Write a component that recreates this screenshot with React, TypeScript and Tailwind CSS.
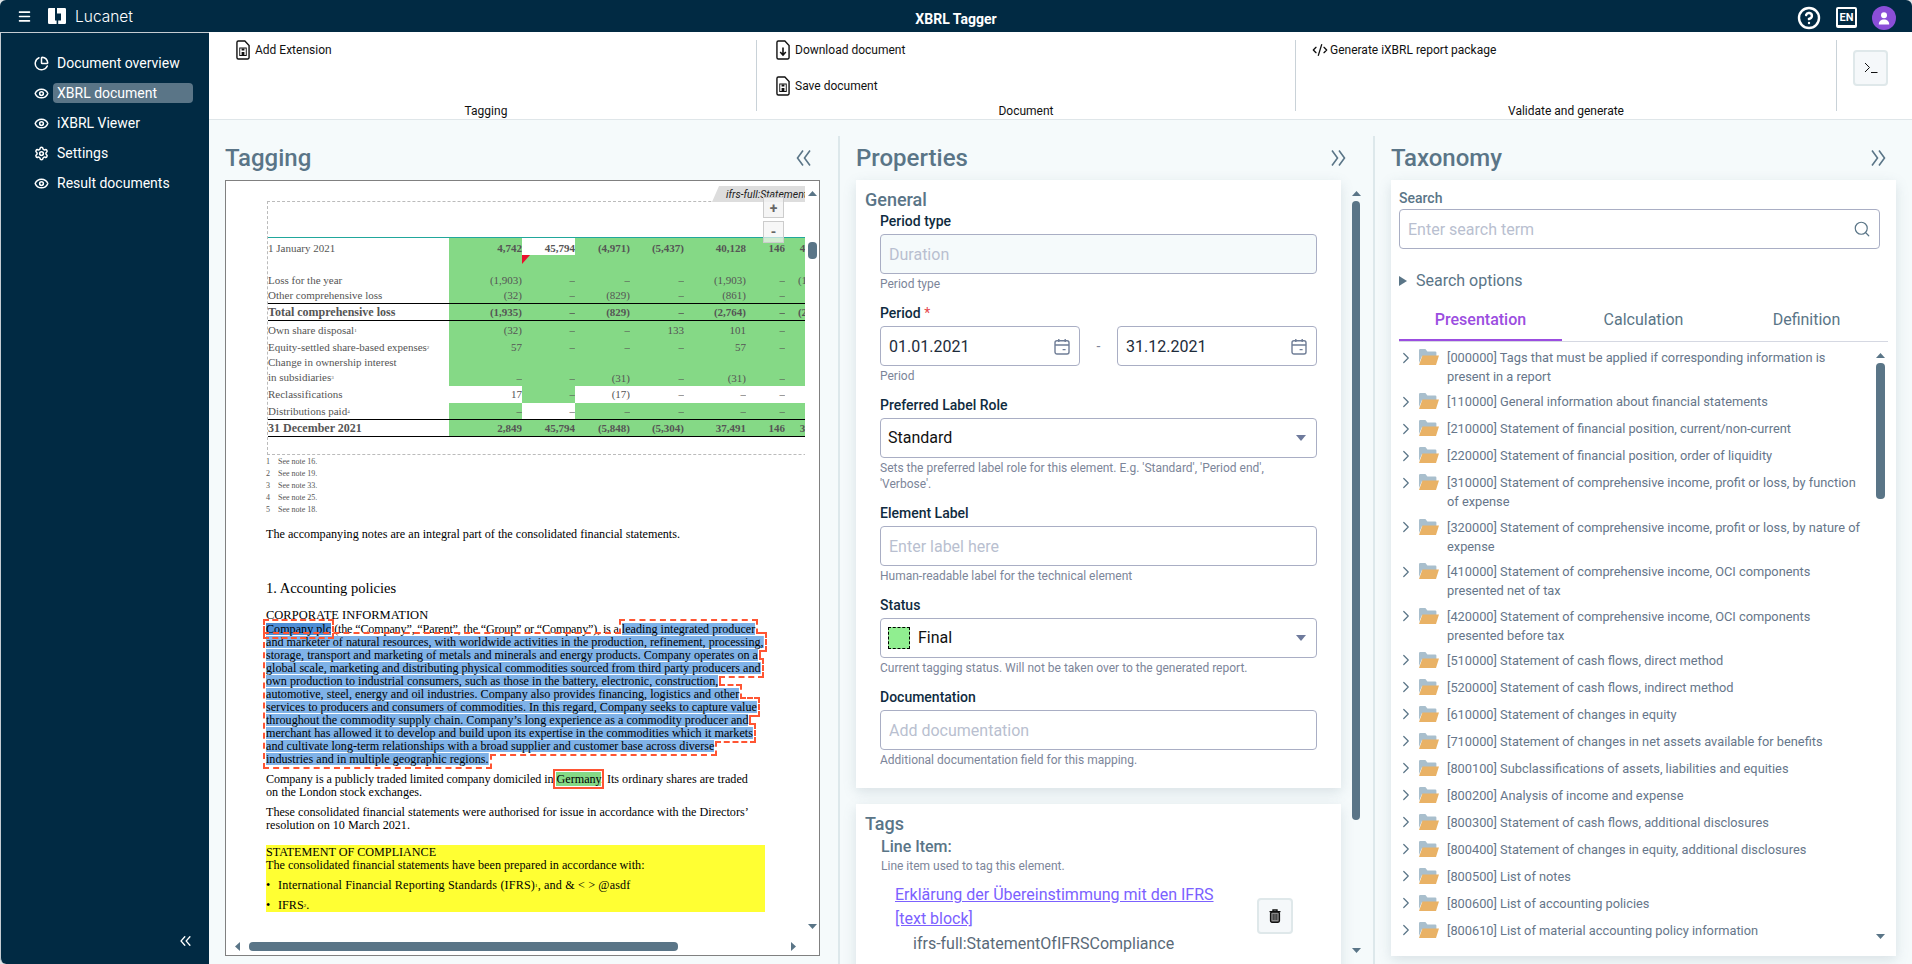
import React from "react";
import { ChartPie, Eye, Settings, ChevronRight, Search, CodeXml, CircleHelp, Menu } from "lucide-react";

const Tri = ({ d, c = "#5a7587", w = 9, h = 5 }: { d: "u" | "d" | "l" | "r"; c?: string; w?: number; h?: number }) => {
  const pts = { u: "0,10 5,0 10,10", d: "0,0 10,0 5,10", l: "10,0 10,10 0,5", r: "0,0 10,5 0,10" }[d];
  return (
    <svg width={w} height={h} viewBox="0 0 10 10" preserveAspectRatio="none" className="block shrink-0">
      <polygon points={pts} fill={c} />
    </svg>
  );
};

const Chevrons = ({ dir, w = 15, h = 16, sw = 1.6, c = "#5a7587" }: { dir: "l" | "r"; w?: number; h?: number; sw?: number; c?: string }) => (
  <svg width={w} height={h} viewBox="0 0 15 16" preserveAspectRatio="none" className="block shrink-0" fill="none" stroke={c} strokeWidth={sw}>
    {dir === "l" ? <path d="M7 0.5L1.5 8 7 15.5M14 0.5L8.5 8 14 15.5" /> : <path d="M1 0.5L6.5 8 1 15.5M8 0.5L13.5 8 8 15.5" />}
  </svg>
);

const FileIcon = ({ kind }: { kind: "floppy" | "down" }) => (
  <svg width="14" height="20" viewBox="0 0 15 20" preserveAspectRatio="none" className="block shrink-0" fill="none" stroke="#111" strokeWidth="1.5">
    <path d="M2.5 1h7l4.5 4.5V17.5a1.5 1.5 0 0 1-1.5 1.5h-10A1.5 1.5 0 0 1 1 17.5V2.5A1.5 1.5 0 0 1 2.5 1z" />
    {kind === "floppy" ? (
      <g strokeWidth="1">
        <rect x="4" y="8" width="7" height="7.5" />
        <rect x="6" y="8.5" width="3" height="2" fill="#111" stroke="none" />
        <rect x="6" y="12" width="3" height="3" fill="#111" stroke="none" />
      </g>
    ) : (
      <path d="M7.5 7.5v7.5M4.5 12l3 3 3-3" strokeWidth="1.7" />
    )}
  </svg>
);

const Logo = () => (
  <svg width="18" height="16" viewBox="0 0 18 16" className="block shrink-0" fill="#fff">
    <path d="M0 1.2A1.2 1.2 0 0 1 1.2 0H7v12.5h1.6V16H1.2A1.2 1.2 0 0 1 0 14.8z" />
    <path d="M9 0h7.8A1.2 1.2 0 0 1 18 1.2v13.6a1.2 1.2 0 0 1-1.2 1.2H10.2v-3.5H13V5.5H9z" />
  </svg>
);

const Calendar = () => (
  <svg width="16" height="17" viewBox="0 0 16 17" className="block shrink-0" fill="none" stroke="#6f7d96" strokeWidth="1.4">
    <rect x="1" y="2.8" width="14" height="13.2" rx="2" />
    <path d="M1 7h14M4.8 1v3M11.2 1v3M8.6 11.6h3" />
  </svg>
);

const Folder = () => (
  <svg width="20" height="16" viewBox="0 0 20 16" className="block shrink-0">
    <path d="M0 1.2A1.2 1.2 0 0 1 1.2 0h5.2l2 2.4h7.8a1.2 1.2 0 0 1 1.2 1.2V7H3L0 14z" fill="#a9bfcd" />
    <path d="M3.4 6.4H20L17 16H0z" fill="#e9b266" />
  </svg>
);

const Trash = () => (
  <svg width="12" height="14" viewBox="0 0 12 14" className="block" fill="none" stroke="#111" strokeWidth="1.4">
    <path d="M0.5 2.6h11M4 2.4V1h4v1.4" />
    <rect x="1.6" y="3" width="8.8" height="10.2" rx="1.4" fill="#8a8a8a" />
    <path d="M4.2 5v6M6 5v6M7.8 5v6" stroke="#111" strokeWidth="0.8" />
  </svg>
);

const nav = [
  { t: "Document overview", i: <ChartPie size={15} strokeWidth={2.4} /> },
  { t: "XBRL document", i: <Eye size={15} strokeWidth={2.4} />, a: true },
  { t: "iXBRL Viewer", i: <Eye size={15} strokeWidth={2.4} /> },
  { t: "Settings", i: <Settings size={15} strokeWidth={2.4} /> },
  { t: "Result documents", i: <Eye size={15} strokeWidth={2.4} /> },
];

const Header = () => (
  <header className="relative flex h-[32px] shrink-0 items-center rounded-t-[6px] bg-[#012a43] text-white">
    <Menu size={15} strokeWidth={2.5} className="ml-[17px] shrink-0" />
    <div className="ml-[16px]"><Logo /></div>
    <span className="ml-[9px] pt-[1px] font-['Inter',sans-serif] text-[15.5px] font-light leading-[32px]">Lucanet</span>
    <div className="absolute left-0 right-0 top-[1px] text-center text-[14px] font-bold leading-[36px]">XBRL Tagger</div>
    <div className="ml-auto mr-[16px] flex items-center">
      <CircleHelp size={24} strokeWidth={2.4} className="mt-[3px]" />
      <span className="ml-[15px] mt-[3px] flex h-[21px] w-[21px] items-center justify-center rounded-[2px] border-2 border-b-[3px] border-white text-[11px] font-bold leading-none">EN</span>
      <span className="ml-[15px] mt-[4px] flex h-[24px] w-[24px] items-center justify-center rounded-full bg-[#8b4ed8]">
        <svg width="12" height="13" viewBox="0 0 12 13" fill="#fff"><circle cx="6" cy="3.2" r="3" /><path d="M0.8 12.5c0-3.2 2.2-5 5.2-5s5.2 1.8 5.2 5z" /></svg>
      </span>
    </div>
  </header>
);

const Sidebar = () => (
  <aside className="flex h-full w-[209px] shrink-0 flex-col rounded-bl-[6px] border-t border-l border-[#c5ccd2] bg-[#012a43] pt-[15px] text-white">
    {nav.map((n) => (
      <div key={n.t} className="flex h-[30px] items-center pl-[33px]">
        <span className="flex w-[19px] shrink-0">{n.i}</span>
        <span className={`flex h-[20px] w-[140px] items-center rounded-[4px] pl-[4px] text-[14px] ${n.a ? "bg-[#5a7587]" : ""}`}>{n.t}</span>
      </div>
    ))}
    <div className="mt-auto mb-[18px] ml-[179px]"><Chevrons dir="l" w={11} h={10} sw={2} c="#fff" /></div>
  </aside>
);

const ToolItem = ({ icon, label, gap = "ml-[5px]" }: { icon: React.ReactNode; label: string; gap?: string }) => (
  <div className="flex h-[20px] items-center">
    {icon}
    <span className={`${gap} text-[12px] leading-[20px] text-[#111]`}>{label}</span>
  </div>
);

const Section = ({ w, pl, label, children }: { w: string; pl: string; label: string; children: React.ReactNode }) => (
  <section className={`flex h-[71px] shrink-0 flex-col border-r border-[#c9d2d8] ${w}`}>
    <div className={`flex flex-col gap-[16px] ${pl}`}>{children}</div>
    <div className="mt-auto mb-[-6px] text-center text-[12px] leading-[12px] text-[#111]">{label}</div>
  </section>
);

const Toolbar = () => (
  <div className="flex h-[88px] shrink-0 border-b border-[#dfe6e9] bg-white pl-[7px] pt-[8px]">
    <Section w="w-[541px]" pl="pl-[20px]" label="Tagging"><ToolItem icon={<FileIcon kind="floppy" />} label="Add Extension" /></Section>
    <Section w="w-[539px]" pl="pl-[19px]" label="Document">
      <ToolItem icon={<FileIcon kind="down" />} label="Download document" />
      <ToolItem icon={<FileIcon kind="floppy" />} label="Save document" />
    </Section>
    <Section w="w-[541px]" pl="pl-[16px]" label="Validate and generate">
      <ToolItem icon={<CodeXml size={16} strokeWidth={2} color="#111" />} label="Generate iXBRL report package" gap="ml-[2px]" />
    </Section>
    <div className="ml-[16px] mt-[10px] flex h-[36px] w-[35px] items-center justify-center rounded-[4px] border-2 border-[#dfe8ea] bg-[#f5f8fa]">
      <svg width="14" height="12" viewBox="0 0 14 12" fill="none" stroke="#111" strokeWidth="1"><path d="M1 1l4.5 4.5L1 10M7 10.5h6.5" /></svg>
    </div>
  </div>
);

const PanelHead = ({ title, dir, right }: { title: string; dir: "l" | "r"; right: string }) => (
  <div className={`flex h-[44px] shrink-0 items-center justify-between ${right}`}>
    <h2 className="text-[24px] font-medium leading-[32px] text-[#5a7587]">{title}</h2>
    <Chevrons dir={dir} />
  </div>
);

type Cell = string | { v: string; w: boolean };
const W = (v: string): Cell => ({ v, w: true });
const S = ({ n }: { n: string }) => <sup className="relative top-[-2px] align-baseline text-[5px] leading-none">{n}</sup>;
const rows: { l: React.ReactNode; c: Cell[]; h: string; b?: boolean; nb?: boolean; line?: boolean; a?: string; ll?: string }[] = [
  { l: "1 January 2021", c: ["4,742", W("45,794"), "(4,971)", "(5,437)", "40,128", "146", "40,274"], h: "h-[34px]", a: "align-top pt-[4px]", nb: true },
  { l: "Loss for the year", c: ["(1,903)", "–", "–", "–", "(1,903)", "–", "(1,903)"], h: "h-[16px]" },
  { l: "Other comprehensive loss", c: ["(32)", "–", "(829)", "–", "(861)", "–", "(861)"], h: "h-[16px]", line: true },
  { l: "Total comprehensive loss", c: ["(1,935)", "–", "(829)", "–", "(2,764)", "–", "(2,764)"], h: "h-[17px]", b: true, line: true },
  { l: <>Own share disposal<S n="1" /></>, c: ["(32)", "–", "–", "133", "101", "–", "101"], h: "h-[19px]" },
  { l: <>Equity-settled share-based expenses<S n="2" /></>, c: ["57", "–", "–", "–", "57", "–", "57"], h: "h-[15px]" },
  { l: <>Change in ownership interest<br />in subsidiaries<S n="3" /></>, c: ["–", "–", "(31)", "–", "(31)", "–", "(31)"], h: "h-[30px]", a: "align-bottom pb-[1px]", ll: "leading-[15px]" },
  { l: "Reclassifications", c: [W("17"), "–", W("(17)"), W("–"), W("–"), W("–"), W("–")], h: "h-[17px]" },
  { l: <>Distributions paid<S n="4" /></>, c: ["–", W("–"), "–", "–", "–", "–", "–"], h: "h-[17px]", line: true },
  { l: "31 December 2021", c: ["2,849", "45,794", "(5,848)", "(5,304)", "37,491", "146", "37,637"], h: "h-[17px]", b: true, line: true, a: "align-middle pt-[1px]" },
];
const colW = ["w-[73px]", "w-[53px]", "w-[55px]", "w-[54px]", "w-[62px]", "w-[39px]", "w-[45px]"];

const DocTable = () => (
  <table className="w-[562px] table-fixed border-separate border-spacing-0 text-[11px] leading-[13px] text-[#555]">
    <colgroup>
      <col className="w-[181px]" />
      {colW.map((c) => <col key={c} className={c} />)}
    </colgroup>
    <tbody>
      {rows.map((r, i) => (
        <tr key={i} className={r.h}>
          <td className={`p-0 ${r.a ?? "align-middle"} ${r.ll ?? ""} whitespace-nowrap ${r.b ? "text-[12px] font-bold" : ""} ${r.line ? "border-b border-black" : ""}`}>{r.l}</td>
          {r.c.map((c, j) => {
            const white = typeof c !== "string";
            const v = typeof c === "string" ? c : c.v;
            return (
              <td key={j} className={`relative overflow-visible whitespace-nowrap p-0 text-right ${r.a ?? "align-middle"} ${white ? "bg-white" : "bg-[#85d986]"} ${r.b || r.nb ? "font-bold" : ""} ${r.line ? "border-b border-black" : ""}`}>
                {i === 0 && j === 1 ? (
                  <>
                    {v}
                    <span className="absolute left-0 top-[17px] h-[17px] w-full bg-[#85d986]">
                      <svg width="8" height="9" className="block" viewBox="0 0 8 9"><polygon points="0,0 8,0 0,9" fill="#e8112d" /></svg>
                    </span>
                  </>
                ) : v}
              </td>
            );
          })}
        </tr>
      ))}
    </tbody>
  </table>
);

const Doc = () => (
  <div className="flex h-[776px] flex-col border border-[#808080] bg-white">
    <div className="flex min-h-0 flex-1">
      <div className="relative min-w-0 flex-1 overflow-hidden pl-[41px] pt-[20px] font-['Liberation_Serif',serif] text-[12.15px] leading-[13px] text-black">
        <div className="h-[254px] w-[700px] border-l border-t border-b border-dashed border-[#bbb]">
          <div className="mt-[35px] border-t border-[#21a79c]"><DocTable /></div>
        </div>
        <div className="absolute left-[486px] top-[5px] h-[16px] w-[93px] overflow-hidden whitespace-nowrap bg-[#ddd] pl-[14px] font-['Roboto',sans-serif] text-[10.5px] italic leading-[17px] text-[#222] [clip-path:polygon(7px_0,100%_0,100%_100%,0_100%)]">ifrs-full:StatementOfIFRSCompliance</div>
        <div className="absolute left-[537px] top-[16px] flex h-[21px] w-[21px] items-center justify-center border border-[#ccc] bg-[#f3f3f3]/80 font-['Roboto',sans-serif] text-[14px] font-bold leading-none text-[#666]">+</div>
        <div className="absolute left-[537px] top-[40px] flex h-[22px] w-[21px] items-center justify-center border border-[#ccc] bg-[#f3f3f3]/70 font-['Roboto',sans-serif] text-[14px] font-bold leading-none text-[#666]">-</div>
        <div className="ml-[-1px] mt-[1px] text-[8px] leading-[12px] text-[#555]">
          {["16", "19", "33", "25", "18"].map((n, i) => (
            <div key={n} className="flex"><span className="w-[12px]">{i + 1}</span><span>See note {n}.</span></div>
          ))}
        </div>
        <div className="ml-[-1px]">
          <p className="mt-[12px] whitespace-nowrap">The accompanying notes are an integral part of the consolidated financial statements.</p>
          <p className="mt-[40px] whitespace-nowrap text-[14.5px] leading-[15px]">1. Accounting policies</p>
          <p className="mt-[12px] whitespace-nowrap text-[12.5px] leading-[14px]">CORPORATE INFORMATION</p>
          <p className="mt-[1px] whitespace-nowrap">
            <span className="bg-[linear-gradient(#4f8fd6,#4f8fd6)] bg-[length:100%_12px] bg-center bg-no-repeat outline-2 outline-offset-1 outline-dashed outline-[#ff5533]">Company plc</span>{" "}
            <span className="tracking-[-0.17px]">(the “Company”, “Parent”, the “Group” or “Company”), is a</span>{" "}
            <span className="outline-2 outline-offset-1 outline-dashed outline-[#ff5533]">
              <span className="bg-[linear-gradient(#7fb2e8,#7fb2e8)] bg-[length:100%_12px] bg-center bg-no-repeat [-webkit-box-decoration-break:clone] [box-decoration-break:clone]">
                leading integrated producer<br />
                and marketer of natural resources, with worldwide activities in the production, refinement, processing,<br />
                storage, transport and marketing of metals and minerals and energy products. Company operates on a<br />
                global scale, marketing and distributing physical commodities sourced from third party producers and<br />
                own production to industrial consumers, such as those in the battery, electronic, construction,<br />
                automotive, steel, energy and oil industries. Company also provides financing, logistics and other<br />
                services to producers and consumers of commodities. In this regard, Company seeks to capture value<br />
                throughout the commodity supply chain. Company’s long experience as a commodity producer and<br />
                merchant has allowed it to develop and build upon its expertise in the commodities which it markets<br />
                and cultivate long-term relationships with a broad supplier and customer base across diverse<br />
                industries and in multiple geographic regions.
              </span>
            </span>
          </p>
          <p className="mt-[7px] whitespace-nowrap">
            <span className="tracking-[-0.08px]">Company is a publicly traded limited company domiciled in</span> <span className="bg-[#85d986] outline-2 outline-offset-1 outline-[#ff5533]">Germany</span>. Its ordinary shares are traded<br />on the London stock exchanges.
          </p>
          <p className="mt-[7px] whitespace-nowrap">These consolidated financial statements were authorised for issue in accordance with the Directors’<br />resolution on 10 March 2021.</p>
          <div className="mt-[13px] h-[67px] w-[499px] whitespace-nowrap bg-[#ffff33]">
            <p className="pt-[1px]">STATEMENT OF COMPLIANCE</p>
            <p>The consolidated financial statements have been prepared in accordance with:</p>
            <p className="mt-[7px] flex"><span className="w-[12px]">•</span><span className="tracking-[0.15px]">International Financial Reporting Standards (IFRS)<S n="1" />, and &amp; &lt; &gt; @asdf</span></p>
            <p className="mt-[7px] flex"><span className="w-[12px]">•</span><span>IFRS<S n="2" />.</span></p>
          </div>
        </div>
      </div>
      <div className="flex w-[14px] shrink-0 flex-col items-center pt-[10px]">
        <Tri d="u" />
        <div className="mt-[46px] h-[17px] w-[9px] rounded-[4px] bg-[#5a7587]" />
        <div className="mt-auto mb-[10px]"><Tri d="d" /></div>
      </div>
    </div>
    <div className="flex h-[16px] shrink-0 items-center pl-[9px] pb-[1px]">
      <Tri d="l" w={5} h={9} />
      <div className="ml-[9px] h-[9px] w-[429px] rounded-[4px] bg-[#5a7587]" />
      <div className="ml-[113px]"><Tri d="r" w={5} h={9} /></div>
    </div>
  </div>
);

const inputCls = "h-[40px] w-full rounded-[4px] border border-[#a9aec4] px-[8px] text-[16px] outline-none placeholder:text-[#b9bfd0]";

const Field = ({ label, help, req, children }: { label: string; help: string; req?: boolean; children: React.ReactNode }) => (
  <div className="mb-[12px]">
    <div className="mb-[4px] text-[14px] font-medium leading-[18px] text-[#0f2b40]">{label}{req && <span className="font-normal text-[#e5484d]"> *</span>}</div>
    {children}
    <div className="mt-[2px] text-[12px] leading-[16px] text-[#7c8599]">{help}</div>
  </div>
);

const SelectBox = ({ children }: { children: React.ReactNode }) => (
  <div className="flex h-[40px] items-center justify-between rounded-[4px] border border-[#a9aec4] pl-[7px] pr-[10px] text-[16px] text-[#111]">
    {children}
    <Tri d="d" c="#6e7a9c" w={10} h={6} />
  </div>
);

const DateBox = ({ v }: { v: string }) => (
  <div className="flex h-[40px] w-[200px] items-center justify-between rounded-[4px] border border-[#a9aec4] pl-[8px] pr-[9px] text-[16px] text-[#1d2b3a]">
    <span className="pt-[1px]">{v}</span><Calendar />
  </div>
);

const card = "bg-white shadow-[0_4px_12px_rgba(90,117,135,0.18)]";

const Properties = () => (
  <div className="flex min-h-0 flex-1">
    <div className="w-[485px] shrink-0">
      <div className={`${card} pl-[9px] pr-[24px] pt-[8px] pb-[8px]`}>
        <h3 className="text-[18px] font-medium leading-[24px] text-[#5a7587]">General</h3>
        <div className="pl-[15px]">
          <Field label="Period type" help="Period type"><input disabled placeholder="Duration" className={`${inputCls} bg-[#f5fafb]`} /></Field>
          <Field label="Period" req help="Period">
            <div className="flex items-center justify-between"><DateBox v="01.01.2021" /><span className="text-[14px] text-[#7c8599]">-</span><DateBox v="31.12.2021" /></div>
          </Field>
          <Field label="Preferred Label Role" help="Sets the preferred label role for this element. E.g. 'Standard', 'Period end', 'Verbose'.">
            <SelectBox>Standard</SelectBox>
          </Field>
          <Field label="Element Label" help="Human-readable label for the technical element"><input placeholder="Enter label here" className={inputCls} /></Field>
          <Field label="Status" help="Current tagging status. Will not be taken over to the generated report.">
            <SelectBox><span className="flex items-center gap-[8px]"><span className="h-[22px] w-[22px] border border-dashed border-black bg-[#90ee90]" />Final</span></SelectBox>
          </Field>
          <Field label="Documentation" help="Additional documentation field for this mapping."><input placeholder="Add documentation" className={inputCls} /></Field>
        </div>
      </div>
      <div className={`${card} mt-[16px] pl-[9px] pr-[24px] pt-[8px] pb-[20px]`}>
        <h3 className="text-[18px] font-medium leading-[24px] text-[#5a7587]">Tags</h3>
        <div className="pl-[16px]">
          <div className="text-[16px] font-medium leading-[22px] text-[#5a7587]">Line Item:</div>
          <div className="text-[12px] leading-[16px] text-[#7c8599]">Line item used to tag this element.</div>
          <div className="mt-[9px] flex">
            <div className="ml-[14px] w-[362px] shrink-0">
              <a className="block w-[330px] text-[16px] leading-[24px] text-[#7b61ff] underline">Erklärung der Übereinstimmung mit den IFRS [text block]</a>
              <div className="ml-[18px] mt-[1px] text-[16px] leading-[24px] text-[#5a6a78]">ifrs-full:StatementOfIFRSCompliance</div>
            </div>
            <div className="mt-[15px] flex h-[36px] w-[36px] items-center justify-center rounded-[4px] border-2 border-[#dfe8ea] bg-[#f5f8fa]"><Trash /></div>
          </div>
        </div>
      </div>
    </div>
    <div className="ml-[11px] flex h-[784px] w-[8px] shrink-0 flex-col items-center pt-[11px]">
      <Tri d="u" />
      <div className="mt-[5px] h-[619px] w-[8px] shrink-0 rounded-[4px] bg-[#5a7587]" />
      <div className="mt-[128px]"><Tri d="d" /></div>
    </div>
  </div>
);

const tree: [string, boolean?][] = [
  ["[000000] Tags that must be applied if corresponding information is present in a report", true],
  ["[110000] General information about financial statements"],
  ["[210000] Statement of financial position, current/non-current"],
  ["[220000] Statement of financial position, order of liquidity"],
  ["[310000] Statement of comprehensive income, profit or loss, by function of expense", true],
  ["[320000] Statement of comprehensive income, profit or loss, by nature of expense", true],
  ["[410000] Statement of comprehensive income, OCI components presented net of tax", true],
  ["[420000] Statement of comprehensive income, OCI components presented before tax", true],
  ["[510000] Statement of cash flows, direct method"],
  ["[520000] Statement of cash flows, indirect method"],
  ["[610000] Statement of changes in equity"],
  ["[710000] Statement of changes in net assets available for benefits"],
  ["[800100] Subclassifications of assets, liabilities and equities"],
  ["[800200] Analysis of income and expense"],
  ["[800300] Statement of cash flows, additional disclosures"],
  ["[800400] Statement of changes in equity, additional disclosures"],
  ["[800500] List of notes"],
  ["[800600] List of accounting policies"],
  ["[800610] List of material accounting policy information"],
];

const Taxonomy = () => (
  <div className={`${card} h-[776px] pl-[8px] pr-[8px] pt-[9px]`}>
    <div className="mb-[2px] text-[14px] font-medium leading-[18px] text-[#5a7587]">Search</div>
    <div className="relative mr-[8px]">
      <input placeholder="Enter search term" className={inputCls} />
      <Search size={18} strokeWidth={1.6} color="#5a7587" className="absolute right-[9px] top-[11px]" />
    </div>
    <div className="mt-[20px] flex h-[24px] items-center text-[16px] text-[#5a7587]">
      <Tri d="r" w={8} h={10} />
      <span className="ml-[9px]">Search options</span>
    </div>
    <div className="mt-[14px] flex h-[35px] border-b border-[#d5d8e2] text-center text-[16px] leading-[26px] text-[#5a7587]">
      <div className="w-[163px] border-b-2 border-[#9b4de0] font-medium text-[#9b4de0]">Presentation</div>
      <div className="w-[163px]">Calculation</div>
      <div className="w-[163px]">Definition</div>
    </div>
    <div className="mt-[2px] flex">
      <div className="w-[477px] shrink-0">
        {tree.map(([t, two]) => (
          <div key={t} className={`flex items-start ${two ? "h-[44.4px]" : "h-[27px]"}`}>
            <ChevronRight size={18} strokeWidth={1.6} color="#5a7587" className="ml-[-2px] mt-[4.5px] shrink-0" />
            <span className="ml-[4px] mt-[5px]"><Folder /></span>
            <span className="ml-[8px] mt-[4px] w-[421px] text-[12.8px] leading-[19px] text-[#66768a]">{t}</span>
          </div>
        ))}
      </div>
      <div className="flex h-[600px] w-[9px] shrink-0 flex-col items-center pt-[9px]">
        <Tri d="u" />
        <div className="mt-[5px] h-[136px] w-[9px] shrink-0 rounded-[4px] bg-[#5a7587]" />
        <div className="mt-[435px]"><Tri d="d" /></div>
      </div>
    </div>
  </div>
);

export default function App() {
  return (
    <div className="flex h-screen w-full flex-col overflow-hidden bg-[#dfe4e7] font-['Roboto',sans-serif]">
      <Header />
      <div className="flex min-h-0 flex-1">
        <Sidebar />
        <main className="flex min-w-0 flex-1 flex-col bg-[#f5fafb]">
          <Toolbar />
          <div className="flex min-h-0 flex-1">
            <div className="w-[628.5px] shrink-0 pl-[16px] pr-[17.5px] pt-[16px]">
              <PanelHead title="Tagging" dir="l" right="pr-[9px]" />
              <Doc />
            </div>
            <div className="mt-[16px] w-[2.5px] shrink-0 bg-[#dde8eb]" />
            <div className="flex w-[532.5px] shrink-0 flex-col overflow-hidden pl-[16px] pt-[16px]">
              <PanelHead title="Properties" dir="r" right="pr-[27px]" />
              <Properties />
            </div>
            <div className="mt-[16px] w-[2.5px] shrink-0 bg-[#dde8eb]" />
            <div className="min-w-0 flex-1 pl-[16px] pr-[16px] pt-[16px]">
              <PanelHead title="Taxonomy" dir="r" right="pr-[10px]" />
              <Taxonomy />
            </div>
          </div>
        </main>
      </div>
    </div>
  );
}
